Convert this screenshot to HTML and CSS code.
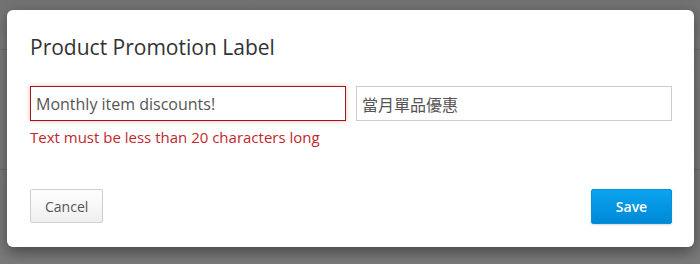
FILE: index.html
```html
<!DOCTYPE html>
<html>
<head>
<meta charset="utf-8">
<link rel="stylesheet" href="styles.css">
</head>
<body>
<div class="dialog">
  <h1 class="title">Product Promotion Label</h1>
  <div class="fields">
    <div class="field">
      <input class="input input-error" type="text" value="Monthly item discounts!">
      <div class="error">Text must be less than 20 characters long</div>
    </div>
    <div class="field">
      <input class="input" type="text" value="當月單品優惠">
    </div>
  </div>
  <div class="actions">
    <button class="btn btn-default">Cancel</button>
    <button class="btn btn-primary">Save</button>
  </div>
</div>
</body>
</html>
```
FILE: styles.css
```css
html, body {
  margin: 0;
  padding: 0;
}
body {
  width: 700px;
  height: 264px;
  overflow: hidden;
  background-color: #7b7b7b;
  background-image:
    linear-gradient(#6f6f6f, #6f6f6f),
    linear-gradient(#6f6f6f, #6f6f6f),
    linear-gradient(#727272, #7d7d7d 40px, #7b7b7b);
  background-size: 100% 1px, 100% 1px, 100% 100%;
  background-position: 0 49px, 0 169px, 0 0;
  background-repeat: no-repeat;
  font-family: "Open Sans", "Noto Sans CJK TC", sans-serif;
  padding-top: 10px;
  box-sizing: border-box;
}
.dialog {
  margin-left: 7px;
  width: 687px;
  height: 237px;
  box-sizing: border-box;
  background: #fff;
  border-radius: 6px;
  box-shadow: 0 5px 15px rgba(0, 0, 0, 0.45);
  padding: 23px 22px 23px 23px;
  display: flex;
  flex-direction: column;
}
.title {
  margin: 0;
  font-size: 21px;
  line-height: 28px;
  font-weight: 400;
  color: #333;
}
.fields {
  margin-top: 25px;
  display: flex;
  gap: 10px;
}
.field {
  flex: 1;
  display: flex;
  flex-direction: column;
}
.input {
  box-sizing: border-box;
  height: 35px;
  width: 100%;
  margin: 0;
  padding: 1px 6px 0 5px;
  border: 1px solid #cccccc;
  border-radius: 0;
  font-family: "Open Sans", "Noto Sans CJK TC", sans-serif;
  font-size: 16px;
  color: #555;
  background: #fff;
  outline: none;
}
.input-error {
  border-color: #a3161e;
  box-shadow: 0 0 4px rgba(200, 40, 40, 0.35);
}
.error {
  margin-top: 6px;
  font-size: 15px;
  line-height: 20px;
  color: #c1272d;
}
.actions {
  margin-top: auto;
  display: flex;
  justify-content: space-between;
  align-items: flex-start;
}
.btn {
  font-family: "Open Sans", sans-serif;
  font-size: 14px;
  border-radius: 2px;
  cursor: pointer;
  box-sizing: border-box;
}
.btn-default {
  height: 34px;
  padding: 0 14px;
  color: #555;
  border: 1px solid #cfcfcf;
  background: linear-gradient(#ffffff, #efefef);
}
.btn-primary {
  height: 35px;
  width: 81px;
  color: #fff;
  font-weight: 600;
  border: 1px solid #0a8fd8;
  background: linear-gradient(#0aa3ef, #0089d6);
  box-shadow: 0 1px 2px rgba(0, 0, 0, 0.15);
}
```
